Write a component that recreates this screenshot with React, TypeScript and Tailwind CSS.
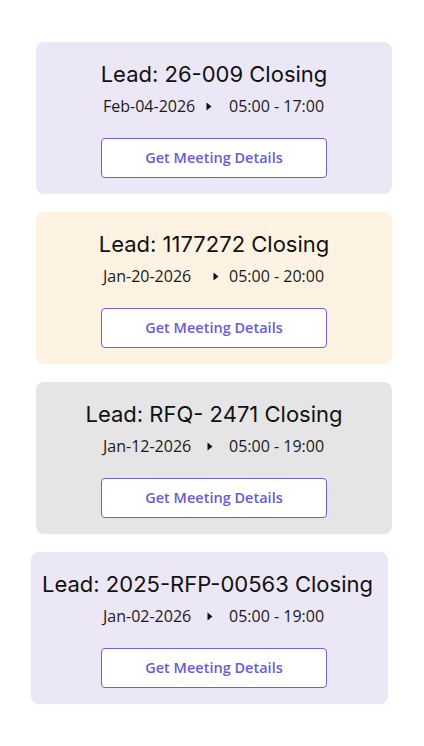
import React from 'react';

interface Meeting {
  lead: string;
  date: string;
  time: string;
  bg: string;
  arrowGap: string;
  offset: string;
  titleShift: string;
  bodyShift: string;
}

const meetings: Meeting[] = [
  { lead: '26-009', date: 'Feb-04-2026', time: '05:00 - 17:00', bg: 'bg-[#ebe7f6]', arrowGap: 'ml-[1px]', offset: 'ml-9 w-[356px]', titleShift: '', bodyShift: '' },
  { lead: '1177272', date: 'Jan-20-2026', time: '05:00 - 20:00', bg: 'bg-[#fef3e3]', arrowGap: 'ml-[8px]', offset: 'ml-9 w-[356px]', titleShift: '', bodyShift: '' },
  { lead: 'RFQ- 2471', date: 'Jan-12-2026', time: '05:00 - 19:00', bg: 'bg-[#e5e5e5]', arrowGap: 'ml-[2px]', offset: 'ml-9 w-[356px]', titleShift: '', bodyShift: '' },
  { lead: '2025-RFP-00563', date: 'Jan-02-2026', time: '05:00 - 19:00', bg: 'bg-[#ebe7f6]', arrowGap: 'ml-[2px]', offset: 'ml-[31px] w-[357px]', titleShift: 'mr-[4px]', bodyShift: 'ml-[9px]' },
];

function Arrow() {
  return (
    <svg width="6" height="9" viewBox="0 0 6 9" className="block">
      <path d="M0.5 0.5 L5.5 4.5 L0.5 8.5 Z" fill="#111111" />
    </svg>
  );
}

function MeetingCard({ m }: { m: Meeting }) {
  return (
    <div className={`${m.offset} ${m.bg} rounded-lg flex flex-col items-center pt-[18px] pb-4`}>
      <div className={`${m.titleShift} h-[28px] leading-[28px] text-[22px] text-[#111111] whitespace-nowrap font-['Inter',sans-serif]`}>
        Lead: {m.lead} Closing
      </div>
      <div className={`${m.bodyShift} mt-[8px] h-5 w-[222px] flex items-center text-[16px] leading-5 text-[#1a1a1a] font-['Open_Sans',sans-serif]`}>
        <span className="w-[102px] whitespace-nowrap">{m.date}</span>
        <span className="w-[24px] flex items-center">
          <span className={m.arrowGap}>
            <Arrow />
          </span>
        </span>
        <span className="whitespace-nowrap">{m.time}</span>
      </div>
      <button className={`${m.bodyShift} mt-[22px] h-10 w-[226px] rounded border border-[#6e5fd6] bg-white text-[14.5px] font-semibold text-[#6a5bd2] font-['Open_Sans',sans-serif]`}>
        Get Meeting Details
      </button>
    </div>
  );
}

export default function App() {
  return (
    <div className="w-[424px] min-h-[746px] bg-white pt-[42px] flex flex-col gap-[18px]">
      {meetings.map((m) => (
        <MeetingCard key={m.lead} m={m} />
      ))}
    </div>
  );
}
